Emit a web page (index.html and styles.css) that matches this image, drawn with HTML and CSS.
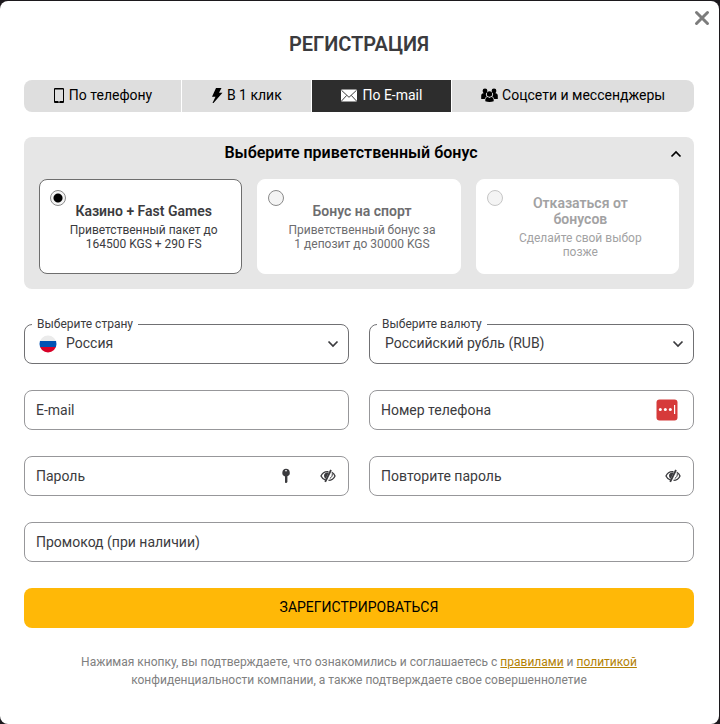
FILE: index.html
```html
<!DOCTYPE html>
<html lang="ru">
<head>
<meta charset="utf-8">
<meta name="viewport" content="width=device-width, initial-scale=1">
<title>Регистрация</title>
<link rel="stylesheet" href="styles.css">
</head>
<body>
<main class="modal">
  <button class="close" type="button" aria-label="Закрыть">
    <svg width="16" height="16" viewBox="0 0 16 16"><path d="M2.500 2.500l11 11M13.500 2.500l-11 11" fill="none" stroke="currentColor" stroke-width="3" stroke-linecap="round"/></svg>
  </button>
  <h1 class="title">РЕГИСТРАЦИЯ</h1>

  <nav class="tabs">
    <button class="tab" type="button">
      <svg width="12" height="16" viewBox="0 0 12 16"><path fill="currentColor" fill-rule="evenodd" d="M2 1h8a1 1 0 0 1 1 1v13a1 1 0 0 1-1 1H2a1 1 0 0 1-1-1V2a1 1 0 0 1 1-1zM2 2.500V14h8V2.500zM5 14.600v.7h2v-.7z"/></svg>
      По телефону
    </button>
    <button class="tab" type="button">
      <svg width="12" height="16" viewBox="0 0 12 16"><path fill="currentColor" d="M5 1h5.500L8 5.700h3.500L2.500 16h-1L4.500 9.700H1z"/></svg>
      В 1 клик
    </button>
    <button class="tab tab-active" type="button">
      <svg width="18" height="14" viewBox="0 0 18 14"><rect x="1" y="1.500" width="16" height="12" rx="1" fill="#fff"/><path d="M1.500 2.300L9 9.300l7.500-7M1.500 13l5.200-5.600M16.500 13l-5.200-5.600" fill="none" stroke="#2d2d2d" stroke-width=".9"/></svg>
      По E-mail
    </button>
    <button class="tab" type="button">
      <svg width="17" height="14" viewBox="0 0 17 14"><g fill="currentColor"><circle cx="4" cy="3" r="2.400"/><circle cx="13" cy="3" r="2.400"/><path d="M.2 11V7.700C.2 5.900 1.600 5 3.200 5h1.900c-.5 1.300-.1 2.600.7 3.400-1 .4-1.800 1.400-2 2.600zM16.800 11V7.700c0-1.800-1.400-2.700-3-2.700h-1.900c.5 1.300.1 2.600-.7 3.400 1 .4 1.800 1.400 2 2.600z"/><circle cx="8.500" cy="6" r="2.700"/><path d="M4.300 13.300v-1.400c0-1.700 1.100-2.900 2.600-2.900l1.600 1 1.600-1c1.500 0 2.600 1.200 2.600 2.900v1.400c-2.400.9-6 .9-8.400 0z"/></g></svg>
      Соцсети и мессенджеры
    </button>
  </nav>

  <section class="bonus">
    <div class="bonus-head">
      <h2 class="bonus-title">Выберите приветственный бонус</h2>
      <button class="bonus-toggle" type="button" aria-label="Свернуть">
        <svg width="12" height="8" viewBox="0 0 12 8"><path d="M1.500 6.500L6 2l4.500 4.500" fill="none" stroke="currentColor" stroke-width="1.700"/></svg>
      </button>
    </div>
    <div class="cards">
      <label class="card card-selected">
        <input class="radio" type="radio" name="bonus" checked>
        <span class="card-title">Казино + Fast Games</span>
        <span class="card-text">Приветственный пакет до 164500 KGS + 290 FS</span>
      </label>
      <label class="card card-sport">
        <input class="radio" type="radio" name="bonus">
        <span class="card-title">Бонус на спорт</span>
        <span class="card-text">Приветственный бонус за 1 депозит до 30000 KGS</span>
      </label>
      <label class="card card-refuse">
        <input class="radio" type="radio" name="bonus">
        <span class="card-title">Отказаться от бонусов</span>
        <span class="card-text">Сделайте свой выбор позже</span>
      </label>
    </div>
  </section>

  <form class="form">
    <div class="field field-select">
      <label class="legend" for="country">Выберите страну</label>
      <svg class="flag" width="18" height="18" viewBox="0 0 18 18"><clipPath id="round"><circle cx="9" cy="9" r="8.500"/></clipPath><g clip-path="url(#round)"><path fill="#ebebeb" d="M0 0h18v6H0z"/><path fill="#0052b4" d="M0 6h18v6H0z"/><path fill="#d80027" d="M0 12h18v6H0z"/></g></svg>
      <select class="select" id="country"><option>Россия</option></select>
      <svg class="chevron" width="12" height="8" viewBox="0 0 12 8"><path d="M1.500 1.500L6 6l4.500-4.500" fill="none" stroke="currentColor" stroke-width="1.700"/></svg>
    </div>
    <div class="field field-select">
      <label class="legend" for="currency">Выберите валюту</label>
      <select class="select" id="currency"><option>Российский рубль (RUB)</option></select>
      <svg class="chevron" width="12" height="8" viewBox="0 0 12 8"><path d="M1.500 1.500L6 6l4.500-4.500" fill="none" stroke="currentColor" stroke-width="1.700"/></svg>
    </div>
    <div class="field">
      <label class="label" for="email">E-mail</label>
      <input class="input" id="email" type="email">
    </div>
    <div class="field">
      <label class="label" for="phone">Номер телефона</label>
      <input class="input" id="phone" type="tel">
      <span class="tools tools-manager">
        <svg width="22" height="22" viewBox="0 0 22 22"><rect x=".5" y=".5" width="21" height="21" rx="3" fill="#d63a3a"/><g fill="#fff"><circle cx="4.300" cy="10.500" r="1.500"/><circle cx="9.300" cy="10.500" r="1.500"/><circle cx="14.300" cy="10.500" r="1.500"/><rect x="18" y="6" width="1.200" height="9"/></g></svg>
      </span>
    </div>
    <div class="field">
      <label class="label" for="password">Пароль</label>
      <input class="input" id="password" type="password">
      <span class="tools">
        <button class="tool" type="button" aria-label="Создать пароль"><svg width="10" height="16" viewBox="0 0 10 16"><path fill="currentColor" fill-rule="evenodd" d="M5 .8a3.900 3.900 0 0 1 1.400 7.500V14L5.500 15 4 14.800V8.400A3.900 3.900 0 0 1 5 .8zM4 2.200v1h2v-1z"/></svg></button>
        <button class="tool" type="button" aria-label="Показать пароль"><svg width="16" height="14" viewBox="0 0 16 14"><g fill="none" stroke="currentColor"><path d="M8.500 2.600C4.700 2.200 2 4.600 1 7c.8 1.800 2.400 3.600 4.700 4.200M11.800 3.300C13.400 4.200 14.500 5.500 15 7c-1 2.400-3.500 4.400-6.500 4.400" stroke-width="1.300"/><path d="M11 1L5.200 12.800" stroke-width="1.800"/><path d="M12.200 4.500c.5 2-.5 3.900-2.400 4.900" stroke-width="1"/></g><path fill="currentColor" d="M8.800 3.500C5.500 3 4 4.500 4 6.500c0 1.600.8 2.800 1.700 3.300z"/></svg></button>
      </span>
    </div>
    <div class="field">
      <label class="label" for="repeat">Повторите пароль</label>
      <input class="input" id="repeat" type="password">
      <span class="tools">
        <button class="tool" type="button" aria-label="Показать пароль"><svg width="16" height="14" viewBox="0 0 16 14"><g fill="none" stroke="currentColor"><path d="M8.500 2.600C4.700 2.200 2 4.600 1 7c.8 1.800 2.400 3.600 4.700 4.200M11.800 3.300C13.400 4.200 14.500 5.500 15 7c-1 2.400-3.500 4.400-6.500 4.400" stroke-width="1.300"/><path d="M11 1L5.200 12.800" stroke-width="1.800"/><path d="M12.200 4.500c.5 2-.5 3.900-2.400 4.900" stroke-width="1"/></g><path fill="currentColor" d="M8.800 3.500C5.500 3 4 4.500 4 6.500c0 1.600.8 2.800 1.700 3.300z"/></svg></button>
      </span>
    </div>
    <div class="field field-wide">
      <label class="label" for="promo">Промокод (при наличии)</label>
      <input class="input" id="promo" type="text">
    </div>
    <button class="submit" type="submit">ЗАРЕГИСТРИРОВАТЬСЯ</button>
  </form>

  <p class="terms">Нажимая кнопку, вы подтверждаете, что ознакомились и соглашаетесь с <a href="#rules">правилами</a> и <a href="#privacy">политикой</a> конфиденциальности компании, а также подтверждаете свое совершеннолетие</p>
</main>
</body>
</html>
```
FILE: styles.css
```css
* {
  box-sizing: border-box;
}

body {
  margin: 0;
  min-height: 100vh;
  padding: 1px 1px 0 0;
  display: flex;
  background: #1c191d;
  font-family: Roboto, "Liberation Sans", sans-serif;
  font-size: 14px;
  color: #3b3b3e;
}

button,
input,
select {
  margin: 0;
  font: inherit;
  color: inherit;
}

button {
  padding: 0;
  border: 0;
  background: none;
  cursor: pointer;
}

svg {
  display: block;
  flex: none;
}

.modal {
  position: relative;
  flex: 1;
  padding: 31px 25px 30px 24px;
  border-radius: 8px;
  background: #fff;
}

.close {
  position: absolute;
  top: 9px;
  right: 9px;
  color: #7c7c7c;
}

.title {
  margin: 0;
  font-size: 20px;
  font-weight: 600;
  line-height: 24px;
  text-align: center;
}

/* Registration methods */
.tabs {
  display: flex;
  gap: 1px;
  margin-top: 24px;
  border-radius: 8px;
  overflow: hidden;
}

.tab {
  display: flex;
  flex: 1 1 auto;
  align-items: center;
  justify-content: center;
  gap: 4px;
  height: 32px;
  padding-bottom: 2px;
  background: #dedede;
  color: #000;
}

.tab-active {
  background: #2d2d2d;
  color: #fff;
}

/* Welcome bonus */
.bonus {
  margin-top: 25px;
  padding: 0 15px 15px;
  border-radius: 8px;
  background: #e6e6e6;
  color: #000;
}

.bonus-head {
  position: relative;
  height: 42px;
  padding: 6px 16px 0 0;
}

.bonus-title {
  margin: 0;
  font-size: 16px;
  font-weight: 600;
  line-height: 20px;
  text-align: center;
}

.bonus-toggle {
  position: absolute;
  top: 13px;
  right: -3px;
}

.cards {
  display: grid;
  grid-template-columns: repeat(3, 1fr);
  gap: 15px;
}

.card {
  position: relative;
  display: flex;
  flex-direction: column;
  justify-content: center;
  gap: 4px;
  min-height: 95px;
  padding: 1px 22px 0 28px;
  border: 1px solid #fff;
  border-radius: 8px;
  background: #fff;
  color: #3b3b3e;
  text-align: center;
}

.card-selected {
  border-color: #6e6e6e;
}

.card-sport {
  color: #6d6d6f;
}

.card-refuse {
  color: #a2a2a3;
}

.card-title {
  font-weight: 600;
  line-height: 16px;
}

.card-text {
  font-size: 12px;
  line-height: 14px;
}

.radio {
  position: absolute;
  top: 10px;
  left: 10px;
  width: 16px;
  height: 16px;
  appearance: none;
  border: 1px solid #8a8a8a;
  border-radius: 50%;
  background: #f4f4f4;
}

.radio:checked {
  background: radial-gradient(circle, #000 4px, #f4f4f4 5px);
}

.card-refuse .radio {
  border-color: #c6c6c6;
}

/* Form */
.form {
  display: grid;
  grid-template-columns: 1fr 1fr;
  gap: 26px 20px;
  margin-top: 35px;
}

.field {
  position: relative;
  display: grid;
  align-items: center;
  height: 40px;
  border: 1px solid #97979a;
  border-radius: 8px;
}

.field-select {
  border-color: #707073;
}

.field-wide,
.submit {
  grid-column: 1 / -1;
}

.field > * {
  grid-area: 1 / 1;
}

.label {
  padding-left: 11px;
  pointer-events: none;
}

.input,
.select {
  width: 100%;
  height: 38px;
  border: 0;
  border-radius: 8px;
  outline: 0;
  background: none;
}

.input {
  padding: 0 11px;
}

.select {
  padding: 0 30px 2px 15px;
  appearance: none;
}

.flag {
  margin-left: 14px;
}

.flag + .select {
  padding-left: 41px;
}

.chevron {
  justify-self: end;
  margin-right: 9px;
  pointer-events: none;
}

.legend {
  position: absolute;
  top: -8px;
  left: 7px;
  padding: 0 5px;
  background: #fff;
  font-size: 12px;
  line-height: 14px;
}

.tools {
  display: flex;
  justify-self: end;
  align-items: center;
  gap: 29px;
  margin-right: 12px;
}

.tools-manager {
  margin-right: 15px;
}

.submit {
  height: 40px;
  padding-bottom: 2px;
  border-radius: 8px;
  background: #ffb807;
  color: #000;
}

.terms {
  max-width: 576px;
  margin: 25px auto 0;
  font-size: 12px;
  line-height: 18px;
  text-align: center;
  color: #808080;
}

.terms a {
  color: #b38205;
}
```
